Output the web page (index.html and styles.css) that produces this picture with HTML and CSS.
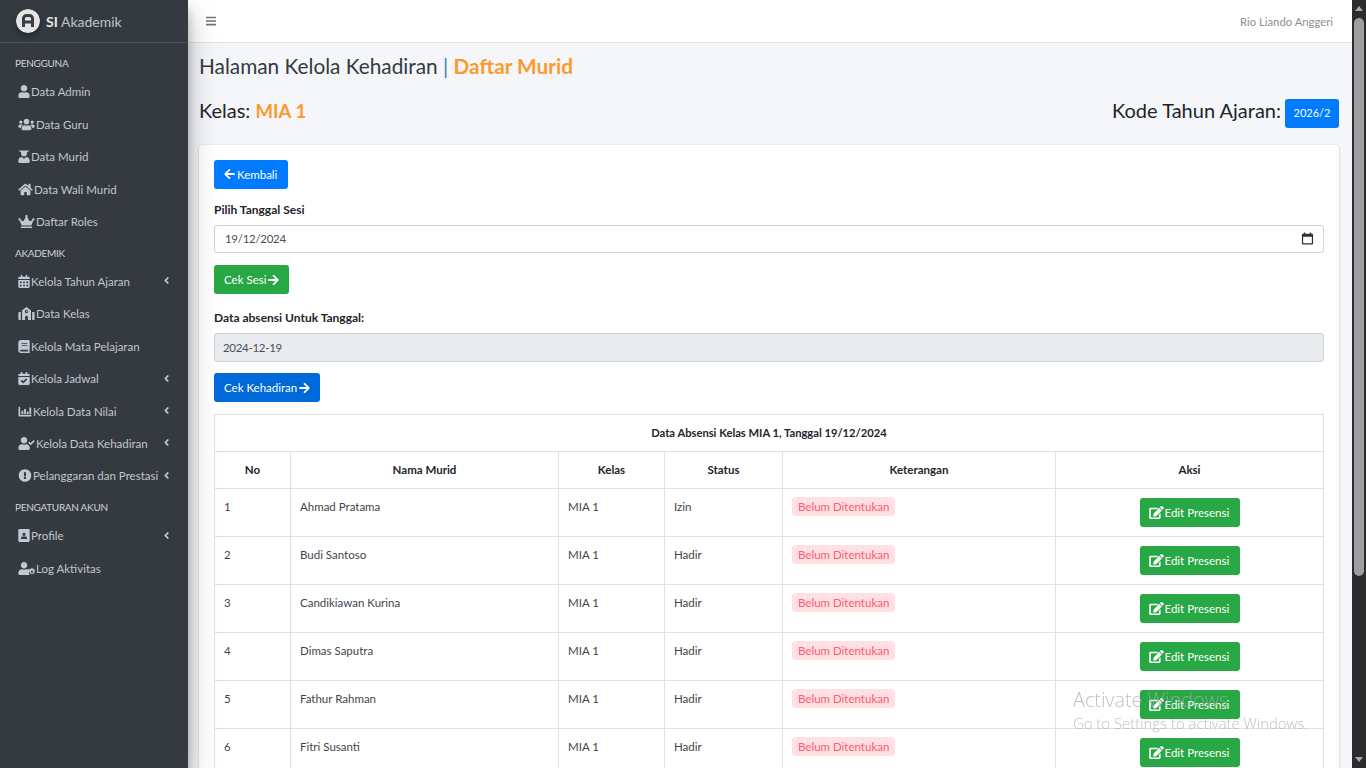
FILE: index.html
```html
<!DOCTYPE html>
<html lang="id">
<head>
    <meta charset="UTF-8">
    <meta name="viewport" content="width=device-width, initial-scale=1.0">
    <title>Kelola Kehadiran</title>
    <link rel="stylesheet" href="styles.css">
</head>
<body>

<!-- icon sprite -->
<svg class="sprite" xmlns="http://www.w3.org/2000/svg">
    <symbol id="i-user" viewBox="0 0 448 512"><path d="M224 256c70.7 0 128-57.3 128-128S294.7 0 224 0 96 57.3 96 128s57.3 128 128 128zm89.6 32h-16.7c-22.2 10.2-46.9 16-72.9 16s-50.6-5.8-72.9-16h-16.7C60.2 288 0 348.2 0 422.4V464c0 26.5 21.5 48 48 48h352c26.5 0 48-21.5 48-48v-41.6c0-74.2-60.2-134.4-134.4-134.4z"/></symbol>
    <symbol id="i-users" viewBox="0 0 640 512"><path d="M96 224c35.3 0 64-28.7 64-64s-28.7-64-64-64-64 28.7-64 64 28.7 64 64 64zm448 0c35.3 0 64-28.7 64-64s-28.7-64-64-64-64 28.7-64 64 28.7 64 64 64zm32 32h-64c-17.6 0-33.5 7.1-45.1 18.6 40.3 22.1 68.9 62 75.1 109.4h66c17.7 0 32-14.3 32-32v-32c0-35.3-28.7-64-64-64zm-256 0c61.9 0 112-50.1 112-112S381.9 32 320 32 208 82.1 208 144s50.1 112 112 112zm76.8 32h-8.3c-20.8 10-43.9 16-68.5 16s-47.6-6-68.5-16h-8.3C179.6 288 128 339.6 128 403.2V432c0 26.5 21.5 48 48 48h288c26.5 0 48-21.5 48-48v-28.8c0-63.6-51.6-115.2-115.2-115.2zm-223.7-13.4C161.5 263.1 145.6 256 128 256H64c-35.3 0-64 28.7-64 64v32c0 17.7 14.3 32 32 32h65.9c6.3-47.4 34.9-87.3 75.2-109.4z"/></symbol>
    <symbol id="i-graduate" viewBox="0 0 448 512"><path d="M14 20h420c8 0 10 6 6 10L340 92v60c0 64-52 104-116 104s-116-40-116-104V92L8 30c-4-4-2-10 6-10zM320 280l-96 60-96-60C60 286 0 350 0 424v40c0 26 22 48 48 48h352c26 0 48-22 48-48v-40c0-74-60-138-128-144z"/></symbol>
    <symbol id="i-home" viewBox="0 0 576 512"><path d="M280.37 148.26L96 300.11V464a16 16 0 0 0 16 16l112.06-.29a16 16 0 0 0 15.92-16V368a16 16 0 0 1 16-16h64a16 16 0 0 1 16 16v95.64a16 16 0 0 0 16 16.05L464 480a16 16 0 0 0 16-16V300L295.67 148.26a12.19 12.19 0 0 0-15.3 0zM571.6 251.47L488 182.56V44.05a12 12 0 0 0-12-12h-56a12 12 0 0 0-12 12v72.61L318.47 43a48 48 0 0 0-61 0L4.34 251.47a12 12 0 0 0-1.6 16.9l25.5 31A12 12 0 0 0 45.15 301l235.22-193.74a12.19 12.19 0 0 1 15.3 0L530.9 301a12 12 0 0 0 16.9-1.6l25.5-31a12 12 0 0 0-1.7-16.93z"/></symbol>
    <symbol id="i-crown" viewBox="0 0 640 512"><path d="M528 448H112c-8.8 0-16 7.2-16 16v32c0 8.8 7.2 16 16 16h416c8.8 0 16-7.2 16-16v-32c0-8.8-7.2-16-16-16zm64-320c-26.5 0-48 21.5-48 48 0 7.1 1.6 13.7 4.4 19.8L476 239.2c-15.4 9.2-35.3 4-44.2-11.6L350.3 85C361 76.2 368 63 368 48c0-26.5-21.5-48-48-48s-48 21.5-48 48c0 15 7 28.2 17.7 37l-81.5 142.6c-8.9 15.6-28.9 20.8-44.2 11.6l-72.3-43.4c2.7-6 4.4-12.7 4.4-19.8 0-26.5-21.5-48-48-48S0 149.5 0 176s21.5 48 48 48c2.6 0 5.2-.4 7.7-.8L128 416h384l72.3-192.8c2.5.4 5.1.8 7.7.8 26.5 0 48-21.5 48-48s-21.5-48-48-48z"/></symbol>
    <symbol id="i-calendar" viewBox="0 0 448 512"><path d="M0 464c0 26.5 21.5 48 48 48h352c26.5 0 48-21.5 48-48V192H0v272zm320-196c0-6.6 5.4-12 12-12h40c6.6 0 12 5.4 12 12v40c0 6.6-5.4 12-12 12h-40c-6.6 0-12-5.4-12-12v-40zm0 128c0-6.6 5.4-12 12-12h40c6.6 0 12 5.4 12 12v40c0 6.6-5.4 12-12 12h-40c-6.6 0-12-5.4-12-12v-40zM192 268c0-6.6 5.4-12 12-12h40c6.6 0 12 5.4 12 12v40c0 6.6-5.4 12-12 12h-40c-6.6 0-12-5.4-12-12v-40zm0 128c0-6.6 5.4-12 12-12h40c6.6 0 12 5.4 12 12v40c0 6.6-5.4 12-12 12h-40c-6.6 0-12-5.4-12-12v-40zM64 268c0-6.6 5.4-12 12-12h40c6.6 0 12 5.4 12 12v40c0 6.6-5.4 12-12 12H76c-6.6 0-12-5.4-12-12v-40zm0 128c0-6.6 5.4-12 12-12h40c6.6 0 12 5.4 12 12v40c0 6.6-5.4 12-12 12H76c-6.6 0-12-5.4-12-12v-40zM400 64h-48V16c0-8.8-7.2-16-16-16h-32c-8.8 0-16 7.2-16 16v48H160V16c0-8.8-7.2-16-16-16h-32c-8.8 0-16 7.2-16 16v48H48C21.5 64 0 85.5 0 112v48h448v-48c0-26.5-21.5-48-48-48z"/></symbol>
    <symbol id="i-school" viewBox="0 0 640 512"><path d="M0 224c0-18 14-32 32-32h64v320H32c-18 0-32-14-32-32V224zm640 0v256c0 18-14 32-32 32h-64V192h64c18 0 32 14 32 32zM304 6c10-8 22-8 32 0l152 120c6 4 8 10 8 16v370H376V400c0-30-26-56-56-56s-56 26-56 56v112H144V142c0-6 2-12 8-16L304 6zm16 102a68 68 0 1 0 0 136 68 68 0 0 0 0-136zm-12 28h24v34h28v24h-52v-58z" fill-rule="evenodd"/></symbol>
    <symbol id="i-book" viewBox="0 0 448 512"><path d="M448 360V24c0-13.3-10.7-24-24-24H96C43 0 0 43 0 96v320c0 53 43 96 96 96h328c13.3 0 24-10.7 24-24v-16c0-7.5-3.5-14.3-8.9-18.7-4.2-15.4-4.2-59.3 0-74.7 5.4-4.3 8.9-11.1 8.9-18.6zM128 134c0-3.3 2.7-6 6-6h212c3.3 0 6 2.7 6 6v20c0 3.3-2.7 6-6 6H134c-3.3 0-6-2.7-6-6v-20zm0 64c0-3.3 2.7-6 6-6h212c3.3 0 6 2.7 6 6v20c0 3.3-2.7 6-6 6H134c-3.3 0-6-2.7-6-6v-20zm253.4 250H96c-17.7 0-32-14.3-32-32 0-17.6 14.4-32 32-32h285.4c-1.9 17.1-1.9 46.9 0 64z"/></symbol>
    <symbol id="i-calcheck" viewBox="0 0 448 512"><path d="M436 160H12c-6.6 0-12-5.4-12-12v-36c0-26.5 21.5-48 48-48h48V12c0-6.6 5.4-12 12-12h40c6.6 0 12 5.4 12 12v52h128V12c0-6.6 5.4-12 12-12h40c6.6 0 12 5.4 12 12v52h48c26.5 0 48 21.5 48 48v36c0 6.6-5.4 12-12 12zM12 192h424c6.6 0 12 5.4 12 12v260c0 26.5-21.5 48-48 48H48c-26.5 0-48-21.5-48-48V204c0-6.6 5.4-12 12-12zm333.3 95.9l-28.2-28.4c-4.7-4.7-12.2-4.7-16.9-.1L194.1 364.6l-46-46.4c-4.7-4.7-12.2-4.7-16.9-.1l-28.4 28.2c-4.7 4.7-4.7 12.2-.1 16.9l82.6 83.3c4.7 4.7 12.2 4.7 16.9.1l142.1-141c4.7-4.7 4.7-12.2 0-16.9z"/></symbol>
    <symbol id="i-chart" viewBox="0 0 512 512"><path d="M496 384H64V80c0-8.84-7.16-16-16-16H16C7.16 64 0 71.16 0 80v336c0 17.67 14.33 32 32 32h464c8.84 0 16-7.16 16-16v-32c0-8.84-7.16-16-16-16zM128 352h48c6 0 12-6 12-12V236c0-6-6-12-12-12h-48c-6 0-12 6-12 12v104c0 6 6 12 12 12zm104 0h48c6 0 12-6 12-12V172c0-6-6-12-12-12h-48c-6 0-12 6-12 12v168c0 6 6 12 12 12zm104 0h48c6 0 12-6 12-12V268c0-6-6-12-12-12h-48c-6 0-12 6-12 12v72c0 6 6 12 12 12zm104 0h48c6 0 12-6 12-12V108c0-6-6-12-12-12h-48c-6 0-12 6-12 12v232c0 6 6 12 12 12z"/></symbol>
    <symbol id="i-usercheck" viewBox="0 0 640 512"><path d="M224 256c70.7 0 128-57.3 128-128S294.7 0 224 0 96 57.3 96 128s57.3 128 128 128zm89.6 32h-16.7c-22.2 10.2-46.9 16-72.9 16s-50.6-5.8-72.9-16h-16.7C60.2 288 0 348.2 0 422.4V464c0 26.5 21.5 48 48 48h352c26.5 0 48-21.5 48-48v-41.6c0-74.2-60.2-134.4-134.4-134.4zm323-128.4l-27.8-28.1c-4.6-4.7-12.1-4.7-16.8-.1l-104.8 104-45.5-45.8c-4.6-4.7-12.1-4.7-16.8-.1l-28.1 27.9c-4.7 4.6-4.7 12.1-.1 16.8l81.7 82.3c4.6 4.7 12.1 4.7 16.8.1l141.3-140.2c4.6-4.7 4.7-12.2.1-16.8z"/></symbol>
    <symbol id="i-alert" viewBox="0 0 512 512"><path d="M504 256c0 136.997-111.043 248-248 248S8 392.997 8 256C8 119.083 119.043 8 256 8s248 111.083 248 248zm-248 50c-25.405 0-46 20.595-46 46s20.595 46 46 46 46-20.595 46-46-20.595-46-46-46zm-43.673-165.346l7.418 136c.347 6.364 5.609 11.346 11.982 11.346h48.546c6.373 0 11.635-4.982 11.982-11.346l7.418-136c.375-6.874-5.098-12.654-11.982-12.654h-63.383c-6.884 0-12.356 5.78-11.981 12.654z"/></symbol>
    <symbol id="i-idcard" viewBox="0 0 448 512"><path d="M48 0h352c26.500 0 48 21.500 48 48v416c0 26.500-21.500 48-48 48H48c-26.500 0-48-21.500-48-48V48C0 21.500 21.500 0 48 0zm176 144a64 64 0 1 0 0 128 64 64 0 0 0 0-128zm-56 148c-36 0-64 28-64 60v20c0 10 8 18 18 18h204c10 0 18-8 18-18v-20c0-32-28-60-64-60H168z" fill-rule="evenodd"/></symbol>
    <symbol id="i-usercog" viewBox="0 0 640 512"><path d="M224 256c70.700 0 128-57.300 128-128S294.700 0 224 0 96 57.300 96 128s57.300 128 128 128zm89.600 32h-16.700c-22.200 10.200-46.900 16-72.900 16s-50.600-5.800-72.900-16h-16.700C60.200 288 0 348.200 0 422.400V464c0 26.500 21.500 48 48 48h352c13 0 24-5 33-13-12-20-19-42-19-67 0-54 32-100 78-122-26-14-55-22-178.400-22z"/><path d="M528 272h32l8 36 26 11 32-20 22 22-20 32 11 26 27 8v32l-27 8-11 26 20 32-22 22-32-20-26 11-8 36h-32l-8-36-26-11-32 20-22-22 20-32-11-26-27-8v-32l27-8 11-26-20-32 22-22 32 20 26-11zm16 108a44 44 0 1 0 0 88 44 44 0 0 0 0-88z" fill-rule="evenodd" transform="translate(-8 -42)"/></symbol>
    <symbol id="i-left" viewBox="0 0 448 512"><path d="M257.500 445.100l-22.200 22.200c-9.400 9.400-24.600 9.400-33.900 0L7 273c-9.400-9.400-9.400-24.600 0-33.900L201.400 44.700c9.400-9.400 24.600-9.400 33.900 0l22.200 22.200c9.500 9.500 9.300 25-.4 34.300L136.600 216H424c13.300 0 24 10.700 24 24v32c0 13.300-10.700 24-24 24H136.600l120.500 114.800c9.800 9.300 10 24.800.4 34.300z"/></symbol>
    <symbol id="i-right" viewBox="0 0 448 512"><path d="M190.500 66.900l22.200-22.200c9.400-9.400 24.600-9.400 33.900 0L441 239c9.400 9.400 9.400 24.600 0 33.900L246.600 467.300c-9.400 9.400-24.600 9.400-33.900 0l-22.200-22.200c-9.500-9.500-9.300-25 .4-34.300L311.400 296H24c-13.300 0-24-10.700-24-24v-32c0-13.300 10.700-24 24-24h287.400L190.900 101.200c-9.800-9.300-10-24.800-.4-34.300z"/></symbol>
    <symbol id="i-angle" viewBox="0 0 256 512"><path d="M31.700 239l136-136c9.400-9.400 24.600-9.400 33.900 0l22.600 22.600c9.400 9.400 9.400 24.600 0 33.900L127.900 256l96.400 96.400c9.400 9.400 9.400 24.600 0 33.900L201.700 409c-9.400 9.400-24.600 9.400-33.900 0l-136-136c-9.500-9.400-9.500-24.600-.1-34z"/></symbol>
    <symbol id="i-bars" viewBox="0 0 448 512"><path d="M16 132h416c8.837 0 16-7.163 16-16V76c0-8.837-7.163-16-16-16H16C7.163 60 0 67.163 0 76v40c0 8.837 7.163 16 16 16zm0 160h416c8.837 0 16-7.163 16-16v-40c0-8.837-7.163-16-16-16H16c-8.837 0-16 7.163-16 16v40c0 8.837 7.163 16 16 16zm0 160h416c8.837 0 16-7.163 16-16v-40c0-8.837-7.163-16-16-16H16c-8.837 0-16 7.163-16 16v40c0 8.837 7.163 16 16 16z"/></symbol>
    <symbol id="i-edit" viewBox="0 0 576 512"><path d="M402.600 83.200l90.200 90.200c3.800 3.800 3.800 10 0 13.800L274.400 405.600l-92.800 10.300c-12.400 1.400-22.900-9.100-21.500-21.500l10.300-92.800L388.800 83.200c3.800-3.800 10-3.800 13.800 0zm162-22.900l-48.800-48.800c-15.200-15.200-39.900-15.200-55.200 0l-35.400 35.400c-3.800 3.800-3.800 10 0 13.800l90.200 90.200c3.800 3.800 10 3.800 13.800 0l35.400-35.400c15.200-15.300 15.200-40 0-55.200zM384 346.200V448H64V128h229.800c3.200 0 6.200-1.300 8.500-3.500l40-40c7.600-7.600 2.200-20.500-8.500-20.500H48C21.500 64 0 85.500 0 112v352c0 26.500 21.500 48 48 48h352c26.500 0 48-21.500 48-48V306.200c0-10.700-12.900-16-20.500-8.500l-40 40c-2.200 2.300-3.500 5.300-3.500 8.500z"/></symbol>
</svg>

<div class="wrapper">
    <aside class="sidebar">
        <a class="brand" href="#">
            <svg class="brand-logo" viewBox="0 0 24 24">
                <circle cx="12" cy="12" r="12" fill="#e4e4e4"/>
                <path d="M7.500 18V9.500a3 3 0 0 1 3-3h3a3 3 0 0 1 3 3V18M7.500 13h9" fill="none" stroke="#3a3f44" stroke-width="3"/>
            </svg>
            <span class="brand-text"><b>SI</b> Akademik</span>
        </a>
        <nav class="nav">
            <div class="nav-header">PENGGUNA</div>
            <a class="nav-link" href="#"><svg class="ic w13"><use href="#i-user"/></svg>Data Admin</a>
            <a class="nav-link" href="#"><svg class="ic w17"><use href="#i-users"/></svg>Data Guru</a>
            <a class="nav-link" href="#"><svg class="ic w13"><use href="#i-graduate"/></svg>Data Murid</a>
            <a class="nav-link" href="#"><svg class="ic w16"><use href="#i-home"/></svg>Data Wali Murid</a>
            <a class="nav-link" href="#"><svg class="ic w17"><use href="#i-crown"/></svg>Daftar Roles</a>
            <div class="nav-header">AKADEMIK</div>
            <a class="nav-link" href="#"><svg class="ic w13"><use href="#i-calendar"/></svg>Kelola Tahun Ajaran<svg class="caret"><use href="#i-angle"/></svg></a>
            <a class="nav-link" href="#"><svg class="ic w17"><use href="#i-school"/></svg>Data Kelas</a>
            <a class="nav-link" href="#"><svg class="ic w13"><use href="#i-book"/></svg>Kelola Mata Pelajaran</a>
            <a class="nav-link" href="#"><svg class="ic w13"><use href="#i-calcheck"/></svg>Kelola Jadwal<svg class="caret"><use href="#i-angle"/></svg></a>
            <a class="nav-link" href="#"><svg class="ic w14"><use href="#i-chart"/></svg>Kelola Data Nilai<svg class="caret"><use href="#i-angle"/></svg></a>
            <a class="nav-link" href="#"><svg class="ic w17"><use href="#i-usercheck"/></svg>Kelola Data Kehadiran<svg class="caret"><use href="#i-angle"/></svg></a>
            <a class="nav-link" href="#"><svg class="ic w14"><use href="#i-alert"/></svg>Pelanggaran dan Prestasi<svg class="caret"><use href="#i-angle"/></svg></a>
            <div class="nav-header">PENGATURAN AKUN</div>
            <a class="nav-link" href="#"><svg class="ic w13"><use href="#i-idcard"/></svg>Profile<svg class="caret"><use href="#i-angle"/></svg></a>
            <a class="nav-link" href="#"><svg class="ic w17"><use href="#i-usercog"/></svg>Log Aktivitas</a>
        </nav>
    </aside>

    <div class="main">
        <header class="topbar">
            <svg class="toggle"><use href="#i-bars"/></svg>
            <span class="username">Rio Liando Anggeri</span>
        </header>

        <section class="content">
            <h1 class="page-title">Halaman Kelola Kehadiran <span class="sep">|</span> <b class="accent">Daftar Murid</b></h1>
            <div class="class-row">
                <div class="class-name">Kelas: <b class="accent accent-sm">MIA 1</b></div>
                <div class="year-code"><span class="year-label">Kode Tahun Ajaran:</span> <span class="year-badge">2026/2</span></div>
            </div>

            <div class="card">
                <a class="btn btn-primary" href="#"><svg class="btn-ic"><use href="#i-left"/></svg>Kembali</a>

                <label class="field-label">Pilih Tanggal Sesi</label>
                <div class="form-control date-input">
                    <span>19/12/2024</span>
                    <svg class="date-ic" viewBox="0 0 14 14"><path d="M3 .5h1.500V2h5V.5H11V2h1a1 1 0 0 1 1 1v9.500a1 1 0 0 1-1 1H2a1 1 0 0 1-1-1V3a1 1 0 0 1 1-1h1zM2.300 5v7.200h9.400V5z" fill-rule="evenodd"/></svg>
                </div>

                <a class="btn btn-success btn-sesi" href="#">Cek Sesi<svg class="btn-ic after"><use href="#i-right"/></svg></a>

                <label class="field-label label-data">Data absensi Untuk Tanggal:</label>
                <div class="form-control readonly">2024-12-19</div>

                <a class="btn btn-focus" href="#">Cek Kehadiran<svg class="btn-ic after"><use href="#i-right"/></svg></a>

                <table class="table">
                    <colgroup>
                        <col class="c-no"><col class="c-nama"><col class="c-kelas"><col class="c-status"><col class="c-ket"><col class="c-aksi">
                    </colgroup>
                    <thead>
                        <tr class="caption-row"><th colspan="6">Data Absensi Kelas MIA 1, Tanggal 19/12/2024</th></tr>
                        <tr><th>No</th><th>Nama Murid</th><th>Kelas</th><th>Status</th><th>Keterangan</th><th>Aksi</th></tr>
                    </thead>
                    <tbody>
                        <tr><td>1</td><td>Ahmad Pratama</td><td>MIA 1</td><td>Izin</td><td><span class="badge-danger">Belum Ditentukan</span></td><td class="aksi"><a class="btn btn-success btn-edit" href="#"><svg class="edit-ic"><use href="#i-edit"/></svg>Edit Presensi</a></td></tr>
                        <tr><td>2</td><td>Budi Santoso</td><td>MIA 1</td><td>Hadir</td><td><span class="badge-danger">Belum Ditentukan</span></td><td class="aksi"><a class="btn btn-success btn-edit" href="#"><svg class="edit-ic"><use href="#i-edit"/></svg>Edit Presensi</a></td></tr>
                        <tr><td>3</td><td>Candikiawan Kurina</td><td>MIA 1</td><td>Hadir</td><td><span class="badge-danger">Belum Ditentukan</span></td><td class="aksi"><a class="btn btn-success btn-edit" href="#"><svg class="edit-ic"><use href="#i-edit"/></svg>Edit Presensi</a></td></tr>
                        <tr><td>4</td><td>Dimas Saputra</td><td>MIA 1</td><td>Hadir</td><td><span class="badge-danger">Belum Ditentukan</span></td><td class="aksi"><a class="btn btn-success btn-edit" href="#"><svg class="edit-ic"><use href="#i-edit"/></svg>Edit Presensi</a></td></tr>
                        <tr><td>5</td><td>Fathur Rahman</td><td>MIA 1</td><td>Hadir</td><td><span class="badge-danger">Belum Ditentukan</span></td><td class="aksi"><a class="btn btn-success btn-edit" href="#"><svg class="edit-ic"><use href="#i-edit"/></svg>Edit Presensi</a></td></tr>
                        <tr><td>6</td><td>Fitri Susanti</td><td>MIA 1</td><td>Hadir</td><td><span class="badge-danger">Belum Ditentukan</span></td><td class="aksi"><a class="btn btn-success btn-edit" href="#"><svg class="edit-ic"><use href="#i-edit"/></svg>Edit Presensi</a></td></tr>
                    </tbody>
                </table>
            </div>
        </section>
    </div>

    <div class="scrollbar">
        <span class="arrow-up"></span>
        <span class="thumb"></span>
        <span class="arrow-down"></span>
    </div>
</div>

<div class="activate">
    <div class="activate-title">Activate Windows</div>
    <div class="activate-sub">Go to Settings to activate Windows.</div>
</div>

</body>
</html>
```

FILE: styles.css
```css
* { box-sizing: border-box; }
html, body { height: 100%; }
body { margin: 0; overflow: hidden; font-family: Lato, "Noto Sans", sans-serif; font-size: 12px; color: #212529; background: #f4f6f9; }
a { text-decoration: none; }
.sprite { display: none; }
.wrapper { display: flex; height: 768px; overflow: hidden; }

/* sidebar */
.sidebar { flex: 0 0 188px; background: #343a40; color: #c2c7d0; box-shadow: 0 14px 28px rgba(0,0,0,0.25), 0 10px 10px rgba(0,0,0,0.22); z-index: 2; }
.brand { display: flex; align-items: center; height: 43px; padding-left: 16px; border-bottom: 1px solid #4b545c; color: #bfc4ca; }
.brand-logo { width: 24px; height: 24px; margin-right: 6px; box-shadow: 0 3px 6px rgba(0,0,0,0.3); border-radius: 50%; }
.brand-text { font-size: 14px; }
.brand-text b { font-weight: 700; color: #e6e8ea; }
.nav { padding-top: 5.2px; }
.nav-header { height: 27.6px; padding: 7.8px 0 0 15px; font-size: 10px; letter-spacing: -0.3px; line-height: 14px; color: #d0d4db; }
.nav-link { display: flex; align-items: center; height: 32.4px; padding-left: 18px; font-size: 11.5px; color: #c2c7d0; fill: #c2c7d0; position: relative; white-space: nowrap; }
.ic { height: 13px; margin-right: 1px; flex: none; }
.w13 { width: 12px; }
.w14 { width: 14px; }
.w16 { width: 15px; }
.w17 { width: 17px; }
.caret { position: absolute; left: 163px; top: 10px; width: 7px; height: 11px; fill: #c2c7d0; }

/* main */
.main { flex: 0 0 1164px; min-width: 0; }
.topbar { display: flex; align-items: center; justify-content: space-between; height: 43px; padding: 0 19px 0 18px; background: #fff; border-bottom: 1px solid #dee2e6; }
.toggle { width: 10px; height: 12px; fill: #6c757d; }
.username { color: #8f8f8f; font-size: 11.3px; }
.content { padding: 0 13px 0 11px; }
.page-title { margin: 0; padding: 9px 0 1px; font-size: 20.8px; line-height: 28px; font-weight: 400; color: #343a40; }
.sep { color: #4a7fb0; }
.accent { color: #fd9a2e; font-weight: 700; }
.accent-sm { font-size: 18.6px; }
.class-row { display: flex; align-items: flex-start; justify-content: space-between; height: 29px; margin-top: 18px; font-size: 20px; line-height: 22px; }
.year-code { display: flex; align-items: flex-start; gap: 4px; }
.year-badge { display: flex; align-items: center; justify-content: center; width: 54px; height: 29px; padding-bottom: 1px; background: #007bff; color: #fff; font-size: 11px; border-radius: 3px; }

/* card */
.card { margin-top: 17px; padding: 15px; background: #fff; border-radius: 4px; box-shadow: 0 0 1px rgba(0,0,0,0.125), 0 1px 3px rgba(0,0,0,0.2); }
.btn { display: inline-flex; align-items: center; height: 29px; padding: 0 10px; color: #fff; fill: #fff; font-size: 11.5px; border-radius: 3px; white-space: nowrap; }
.btn-primary { background: #007bff; padding-bottom: 1px; width: 74px; }
.btn-success { background: #28a745; }
.btn-focus { background: #0069d9; display: flex; width: 106px; margin-top: 11px; }
.btn-sesi { display: flex; width: 75px; margin-top: 12px; }
.btn-edit { width: 100px; padding: 0 9px; }
.btn-ic { width: 11px; height: 12px; margin-right: 2px; flex: none; }
.btn-ic.after { margin: 0 0 0 2px; }
.field-label { display: block; margin-top: 13px; font-weight: 700; font-size: 12px; line-height: 15px; color: #212529; }
.label-data { margin-top: 16px; }
.form-control { display: flex; align-items: center; height: 28px; margin-top: 8px; padding: 0 10px 1px; border: 1px solid #ced4da; border-radius: 3px; color: #495057; font-size: 11.5px; letter-spacing: -0.3px; }
.date-input { justify-content: space-between; }
.date-ic { width: 13px; height: 13px; margin-right: -1px; fill: #2f2f2f; }
.readonly { height: 29px; padding: 0 8px; background: #e9ecef; }

/* table */
.table { width: 1109px; margin-top: 12px; border-collapse: collapse; table-layout: fixed; font-size: 11.5px; color: #212529; }
.c-no { width: 76px; }
.c-nama { width: 268px; }
.c-kelas { width: 106px; }
.c-status { width: 118px; }
.c-ket { width: 273px; }
.c-aksi { width: 268px; }
.table th, .table td { border: 1px solid #dee2e6; }
.table th { height: 37px; padding: 0 0 2px; text-align: center; font-weight: 700; }
.caption-row th { font-size: 11.2px; }
.table td { height: 48px; padding: 10px 9px 0; vertical-align: top; line-height: 16px; color: #3f454b; }
.table td .btn { vertical-align: top; }
.table td.aksi { padding-top: 9px; text-align: center; }
.badge-danger { display: inline-block; height: 19px; margin-top: -2px; padding: 0 6px; line-height: 19px; background: #ffe0e3; color: #ff5a6e; border-radius: 4px; vertical-align: top; }
.edit-ic { width: 15px; height: 13px; margin-right: 1px; flex: none; }

/* scrollbar drawn by hand, the shot has none of its own */
.scrollbar { flex: 0 0 14px; position: relative; background: #2c2c2c; z-index: 3; }
.thumb { position: absolute; left: 2px; top: 18px; width: 10px; height: 558px; background: #9e9e9e; border-radius: 5px; }
.arrow-up, .arrow-down { position: absolute; left: 3px; width: 0; height: 0; border-left: 4px solid transparent; border-right: 4px solid transparent; }
.arrow-up { top: 6px; border-bottom: 5px solid #a8a8a8; }
.arrow-down { bottom: 6px; border-top: 5px solid #a8a8a8; }

/* windows watermark */
.activate { position: fixed; left: 1073px; top: 688px; color: rgba(170,170,170,0.75); font-family: "Open Sans", sans-serif; font-weight: 300; pointer-events: none; z-index: 5; }
.activate-title { font-size: 19.8px; line-height: 24px; }
.activate-sub { font-size: 14.9px; line-height: 22px; }
```
